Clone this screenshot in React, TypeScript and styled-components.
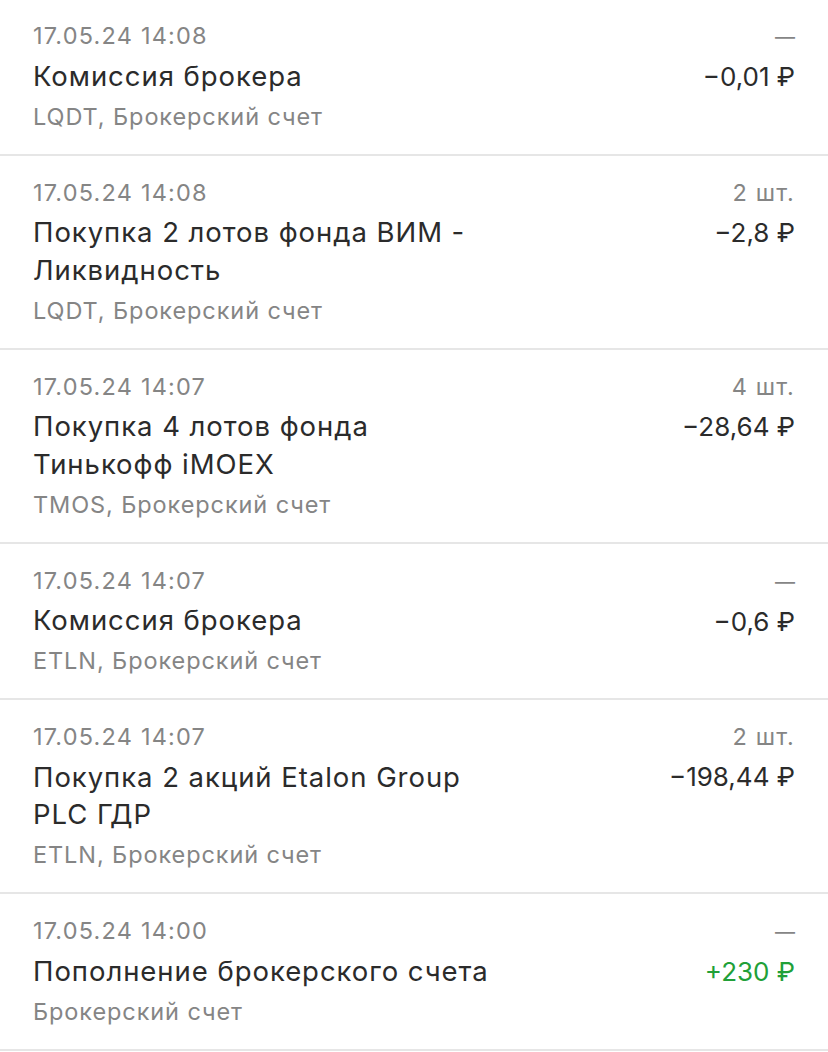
import React from "react";
import styled, { createGlobalStyle } from "styled-components";

const GlobalStyle = createGlobalStyle`
	html, body {
		margin: 0;
		padding: 0;
		background: #fff;
	}
	body {
		font-family: Inter, "Noto Sans", "DejaVu Sans", sans-serif;
		-webkit-font-smoothing: antialiased;
	}
`;

const List = styled.div`
	margin-top: -1px;
	background: #fff;
`;

const Row = styled.div`
	display: flex;
	justify-content: space-between;
	padding: 17px 33px 17px 33px;
	border-bottom: 2px solid #e6e6e6;
`;

const Left = styled.div`
	display: flex;
	flex-direction: column;
`;

const Right = styled.div`
	display: flex;
	flex-direction: column;
	align-items: flex-end;
`;

const Meta = styled.div`
	font-size: 23.5px;
	line-height: 40px;
	color: #858585;
	letter-spacing: 1.2px;
	white-space: nowrap;
`;

const Dash = styled.span`
	font-size: 20px;
	letter-spacing: 0;
`;

const TitleBlock = styled.div`
	padding: 1.5px 0;
`;

const Title = styled.div`
	font-size: 27.5px;
	line-height: 37.5px;
	color: #2b2b2b;
	letter-spacing: 0.95px;
	white-space: nowrap;
`;

const Sub = styled.div`
	font-size: 23.5px;
	line-height: 40px;
	color: #858585;
	letter-spacing: 0.9px;
	white-space: nowrap;
`;

const Amount = styled.div<{ $positive?: boolean }>`
	margin-top: 1px;
	font-size: 26px;
	line-height: 37.5px;
	color: ${(p) => (p.$positive ? "#21a038" : "#2b2b2b")};
	white-space: nowrap;
`;

interface IOperation {
	date: string;
	title: string[];
	sub: string;
	qty?: string;
	amount: string;
	positive?: boolean;
}

const operations: IOperation[] = [
	{
		date: "17.05.24 14:08",
		title: ["Комиссия брокера"],
		sub: "LQDT, Брокерский счет",
		amount: "−0,01 ₽"
	},
	{
		date: "17.05.24 14:08",
		title: ["Покупка 2 лотов фонда ВИМ -", "Ликвидность"],
		sub: "LQDT, Брокерский счет",
		qty: "2 шт.",
		amount: "−2,8 ₽"
	},
	{
		date: "17.05.24 14:07",
		title: ["Покупка 4 лотов фонда", "Тинькофф iMOEX"],
		sub: "TMOS, Брокерский счет",
		qty: "4 шт.",
		amount: "−28,64 ₽"
	},
	{
		date: "17.05.24 14:07",
		title: ["Комиссия брокера"],
		sub: "ETLN, Брокерский счет",
		amount: "−0,6 ₽"
	},
	{
		date: "17.05.24 14:07",
		title: ["Покупка 2 акций Etalon Group", "PLC ГДР"],
		sub: "ETLN, Брокерский счет",
		qty: "2 шт.",
		amount: "−198,44 ₽"
	},
	{
		date: "17.05.24 14:00",
		title: ["Пополнение брокерского счета"],
		sub: "Брокерский счет",
		amount: "+230 ₽",
		positive: true
	}
];

export default function App() {
	return (
		<>
			<GlobalStyle />
			<List>
				{operations.map((op, i) => (
					<Row key={i}>
						<Left>
							<Meta>{op.date}</Meta>
							<TitleBlock>
								{op.title.map((line, j) => (
									<Title key={j}>{line}</Title>
								))}
							</TitleBlock>
							<Sub>{op.sub}</Sub>
						</Left>
						<Right>
							<Meta>{op.qty ?? <Dash>—</Dash>}</Meta>
							<Amount $positive={op.positive}>{op.amount}</Amount>
						</Right>
					</Row>
				))}
			</List>
		</>
	);
}
